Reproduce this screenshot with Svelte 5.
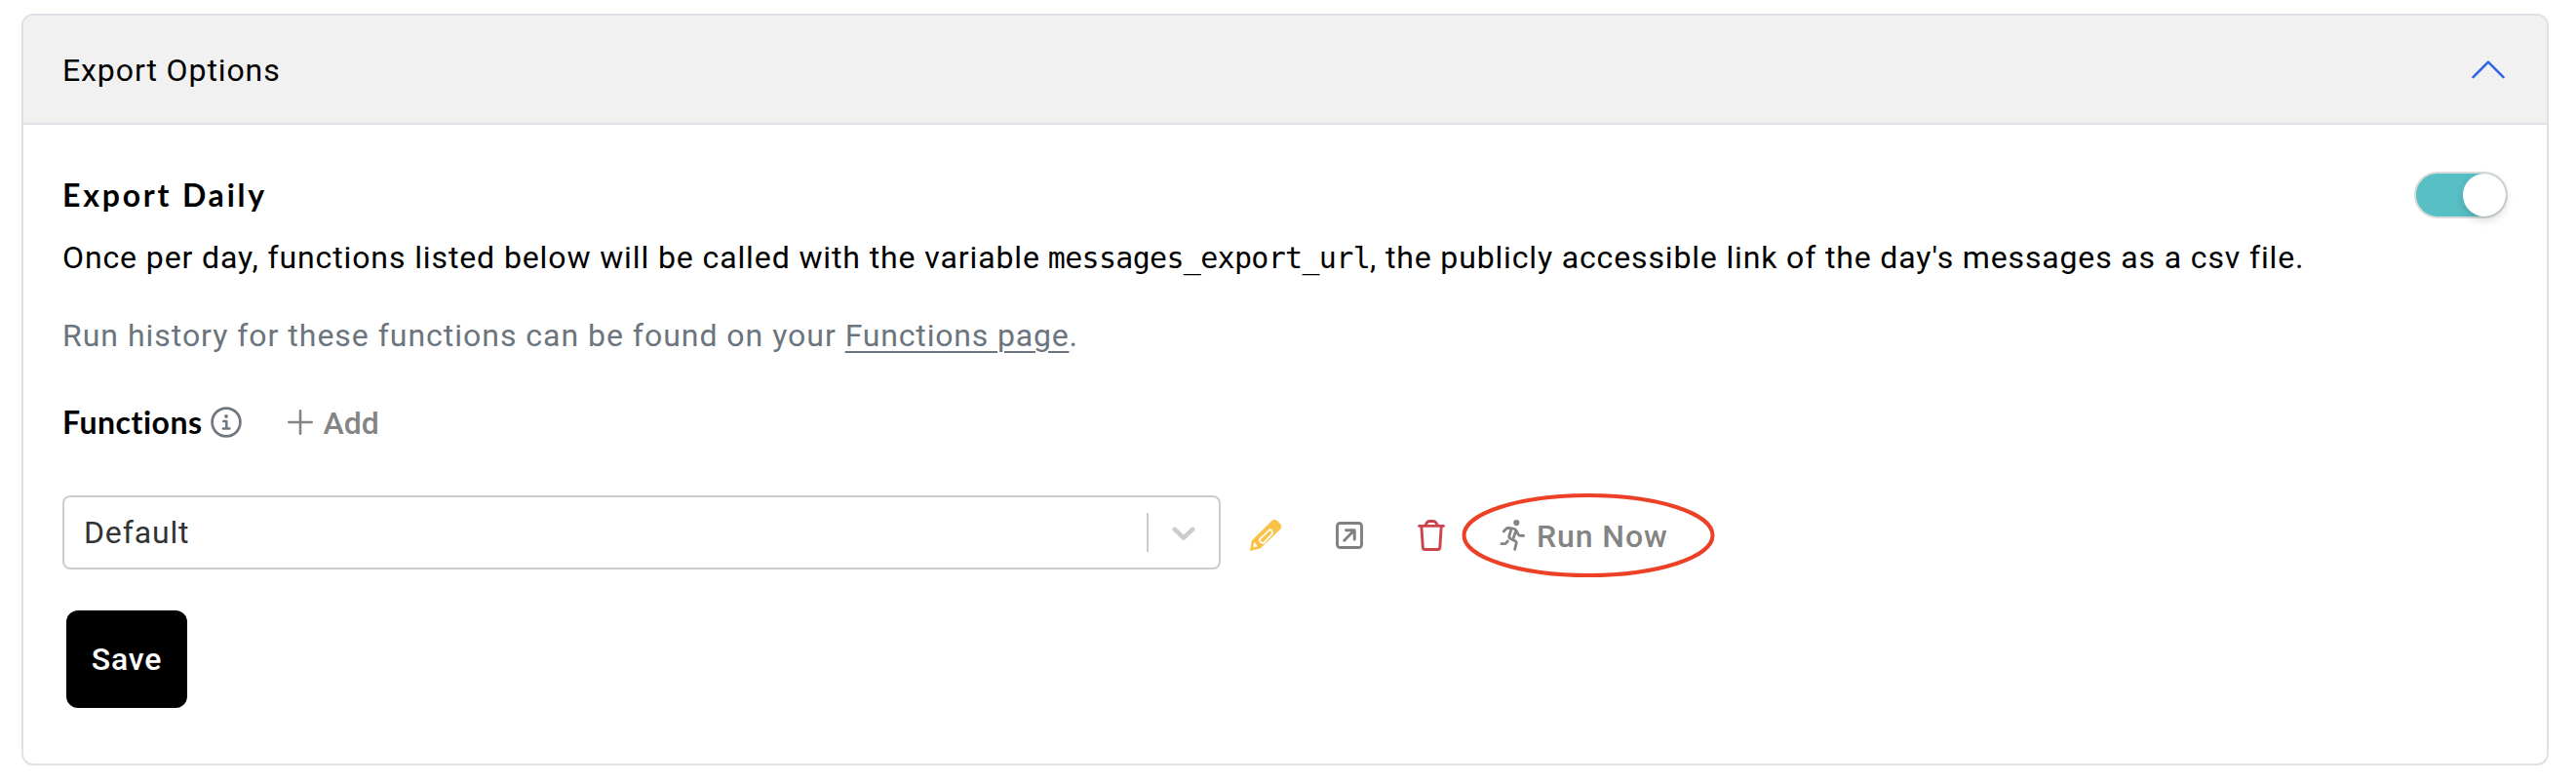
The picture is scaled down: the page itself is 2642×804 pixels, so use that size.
<script>
  let expanded = $state(true);
  let daily = $state(true);
</script>

<section class="card">
  <header>
    <span class="heading">Export Options</span>
    <svg class="caret" class:closed={!expanded} width="34" height="20" viewBox="0 0 34 20" fill="none">
      <path d="M1.500 18.200 17 2.700 32.500 18.200" stroke="#2f66e3" stroke-width="2.600" stroke-linecap="round" stroke-linejoin="round" />
    </svg>
  </header>

  <div class="body">
    <div class="title-row">
      <h2>Export Daily</h2>
      <span class="toggle" class:on={daily}><span class="knob"></span></span>
    </div>

    <p class="desc"><span class="part">Once per day, functions listed below will be called with the variable</span>{' '}<code>messages_export_url</code><span class="rest">, the publicly accessible link of the day's messages as a csv file.</span></p>

    <p class="history">Run history for these functions can be found on your <a href="#functions">Functions page</a>.</p>

    <div class="functions-row">
      <h3>Functions</h3>
      <svg class="info" width="32" height="32" viewBox="0 0 32 32" fill="none" stroke="#6f7780">
        <circle cx="16" cy="16" r="14.400" stroke-width="2.700" />
        <circle cx="16" cy="9.900" r="1.900" fill="#6f7780" stroke="none" />
        <path d="M13.300 14.900h3v7.300M12.800 22.400h6.600" stroke-width="2.500" stroke-linecap="round" stroke-linejoin="round" />
      </svg>
      <button class="add">
        <svg width="26" height="26" viewBox="0 0 26 26" stroke="#848484" stroke-width="2.600" stroke-linecap="round">
          <path d="M13 1.300v23.400M1.300 13h23.400" />
        </svg>
        <span>Add</span>
      </button>
    </div>

    <div class="picker-row">
      <div class="select">
        <span class="value">Default</span>
        <span class="divider"></span>
        <svg width="40" height="40" viewBox="0 0 20 20" fill="#ccc">
          <path d="M4.516 7.548c0.436-0.446 1.043-0.481 1.576 0l3.908 3.747 3.908-3.747c0.533-0.481 1.141-0.446 1.574 0 0.436 0.445 0.408 1.197 0 1.615-0.406 0.418-4.695 4.502-4.695 4.502-0.217 0.223-0.502 0.335-0.787 0.335s-0.570-0.112-0.789-0.335c0 0-4.287-4.084-4.695-4.502s-0.436-1.170 0-1.615z" />
        </svg>
      </div>

      <svg class="pencil" width="32" height="32" viewBox="0 0 32 32" fill="none" stroke-linejoin="round" stroke-linecap="round">
        <path d="M1 31 2.600 21.800 22.800 2c1.700-1.600 3.300-1.600 4.900 0l2.600 2.600c1.500 1.500 1.500 3.200 0 4.800L10.600 28.400Z" fill="#f8c347" stroke="#f8c347" stroke-width="1.800" />
        <path d="M20.500 10 9.800 20.200l1.200 3 2.800 1L23 14.200l-.7-3Z" stroke="#fff" stroke-width="1.700" />
        <path d="M12.800 20.300 19.400 13.700" stroke="#f8c347" stroke-width="2" />
        <path d="M4.500 23.700 3.700 27.700 6.900 27.200Z" fill="#fff" stroke="#fff" stroke-width=".8" />
      </svg>

      <svg class="open" width="28" height="28" viewBox="0 0 28 28" fill="none" stroke="#808080" stroke-width="2.900" stroke-linejoin="round" stroke-linecap="round">
        <rect x="1.500" y="1.500" width="25" height="25" rx="3" />
        <path d="M10.500 8.700H19.200V18.200M8.700 19.300 18.800 9.100" />
      </svg>

      <svg class="trash" width="28" height="32" viewBox="0 0 28 32" fill="none" stroke="#cb444c" stroke-width="2.900" stroke-linejoin="round" stroke-linecap="round">
        <path d="M1.500 6.400H26.500M7.800 6 9.600 2.800Q10.400 1.500 12 1.500H16.200Q17.800 1.500 18.700 2.800L20.600 6M3.900 7 5.300 28.300Q5.500 30.500 7.700 30.500H20.500Q22.600 30.500 22.800 28.300L24.200 7" />
      </svg>

      <button class="run">
        <svg width="28" height="32" viewBox="0 0 28 32" fill="none" stroke="#848484" stroke-width="2.800" stroke-linejoin="round" stroke-linecap="round">
          <circle cx="17.300" cy="3.100" r="3.100" fill="#848484" stroke="none" />
          <path d="M4.200 12 6.600 9.400Q7.700 8.400 9.300 8.500L14 9.100Q16 9.300 17 11L19.300 15.200Q19.800 16.400 21 16.400H24.600M12 9.600 10 16Q9.300 18.600 11.500 19.600L16.400 22.100Q17.500 22.600 17.200 23.900L15.600 30.300M16.600 11.800 14.400 18.200M1.900 24.600H5.200Q6.500 24.600 7.100 23.600L8.300 21.900" />
        </svg>
        <span>Run Now</span>
        <svg class="ring" width="260" height="88" viewBox="0 0 260 88" fill="none">
          <ellipse cx="130" cy="44" rx="127.500" ry="41" stroke="#ec4127" stroke-width="4" />
        </svg>
      </button>
    </div>

    <button class="save">Save</button>
  </div>
</section>

<style>
  :global(body) { margin: 0; background: #fff; }
  * { box-sizing: border-box; }
  button { border: 0; padding: 0; background: none; font: inherit; }
  svg { display: block; flex: none; }
  .card {
    width: 2592px;
    height: 771px;
    margin: 14px 0 0 22px;
    border: 2px solid #dee2e6;
    border-radius: 12px;
    overflow: hidden;
    font: 400 32px/48px Roboto, sans-serif;
    color: #000;
    white-space: nowrap;
  }
  header {
    height: 112px;
    padding: 0 43px 0 40px;
    display: flex;
    align-items: center;
    justify-content: space-between;
    background: #f1f1f1;
    border-bottom: 2px solid #dee2e6;
  }
  .heading { letter-spacing: .9px; padding-top: 2px; }
  .caret.closed { transform: rotate(180deg); }
  .body { padding: 48px 40px 0; display: flex; flex-direction: column; align-items: flex-start; }
  .title-row { width: 100%; height: 48px; display: flex; justify-content: space-between; align-items: center; }
  h2, h3 { margin: 0; font: 700 32px/48px Lato, sans-serif; }
  h2 { letter-spacing: 2.800px; padding-bottom: 1px; }
  h3 { letter-spacing: .5px; }
  .toggle {
    width: 96px;
    height: 48px;
    border: 2px solid #dadada;
    border-radius: 24px;
    display: flex;
    background: #fff;
  }
  .toggle.on { background: #58bfc4; justify-content: flex-end; }
  .knob { width: 44px; height: 44px; border-radius: 50%; background: #fff; box-shadow: 0 4px 10px rgba(0, 0, 0, .15); }
  p { margin: 0; height: 48px; }
  .desc { margin-top: 16px; }
  .part { letter-spacing: .89px; }
  .rest { letter-spacing: .85px; }
  code { font: 30px/1 "DejaVu Sans Mono", monospace; letter-spacing: -.68px; }
  .history { margin-top: 32px; color: #6c757d; letter-spacing: .98px; }
  a { color: inherit; letter-spacing: .82px; text-decoration: underline; text-decoration-thickness: 1.500px; text-underline-offset: 5px; }
  .functions-row { display: flex; align-items: center; height: 48px; margin-top: 41px; }
  .info { margin-left: 8px; }
  .add { display: flex; align-items: center; gap: 11px; margin-left: 47px; color: #848484; font-weight: 500; }
  .add span { padding-top: 1px; }
  .picker-row { display: flex; align-items: center; margin-top: 51px; height: 76px; }
  .select {
    width: 1188px;
    height: 76px;
    border: 2px solid #ccc;
    border-radius: 8px;
    display: flex;
    align-items: center;
    padding: 0 16px 0 20px;
    color: #333;
  }
  .value { flex: 1; letter-spacing: .85px; }
  .divider { width: 2px; height: 40px; background: #ccc; margin-right: 16px; }
  .pencil { margin: 6px 0 0 30px; }
  .open { margin: 6px 0 0 56px; }
  .trash { margin: 6px 0 0 56px; }
  .run { position: relative; display: flex; align-items: center; margin: 6px 0 0 56px; gap: 10px; color: #848484; font-weight: 500; letter-spacing: .9px; }
  .run span { padding-top: 2px; }
  .ring { position: absolute; left: -39px; top: -19px; }
  .save {
    width: 124px;
    height: 100px;
    margin: 42px 0 0 4px;
    border-radius: 12px;
    background: #000;
    color: #fff;
    font-weight: 500;
    letter-spacing: .8px;
  }
</style>
